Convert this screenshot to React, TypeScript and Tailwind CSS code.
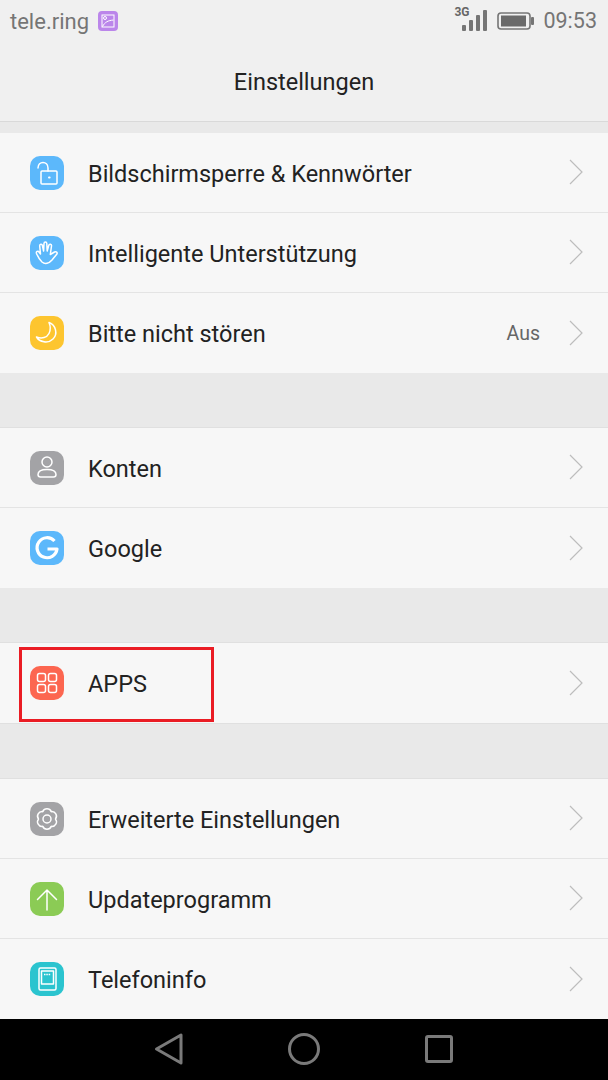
import type { ReactNode } from 'react'

function IconBox({ color, children }: { color: string; children: ReactNode }) {
  return (
    <div className={`flex h-[34px] w-[34px] shrink-0 items-center justify-center rounded-[10px] ${color}`}>
      <svg viewBox="0 0 34 34" className="h-[34px] w-[34px]" fill="none" stroke="white" strokeWidth="1.5" strokeLinecap="round" strokeLinejoin="round">
        {children}
      </svg>
    </div>
  )
}

function Chevron() {
  return (
    <svg viewBox="0 0 14 26" className="mb-[1px] h-[26px] w-[14px]" fill="none" stroke="#bdbdbd" strokeWidth="1.2">
      <path d="M1 1 L13 13 L1 25" />
    </svg>
  )
}

function Row({
  icon,
  label,
  value,
  last,
}: {
  icon: ReactNode
  label: string
  value?: string
  last?: boolean
}) {
  return (
    <div className={`flex h-[80px] items-center bg-[#f7f7f7] pl-[30px] pr-[25px] ${last ? '' : 'border-b border-[#e4e4e4]'}`}>
      {icon}
      <div className="ml-[24px] flex-1 pt-[4px] text-[23.5px] text-[#222222]">{label}</div>
      {value && <div className="mr-[29px] pt-[2px] text-[19.5px] text-[#666666]">{value}</div>}
      <Chevron />
    </div>
  )
}

function Gap() {
  return <div className="h-[55px] border-b border-[#e0e0e0] bg-[#e9e9e9]" />
}

export default function App() {
  return (
    <div className="flex h-[1080px] w-[608px] flex-col overflow-hidden bg-[#f0f0f0] font-['Roboto',sans-serif]">
      <div className="h-[122px] shrink-0 border-b border-[#d9d9d9]">
        <div className="flex h-[42px] items-center pl-[10px] pr-[11px]">
          <span className="text-[22px] text-[#757575]">tele.ring</span>
          <svg viewBox="0 0 20 20" className="ml-[9px] h-[20px] w-[20px]" fill="none" stroke="white" strokeWidth="1">
            <rect width="20" height="20" rx="4" fill="#bb86ea" stroke="none" />
            <rect x="4" y="4" width="12" height="12" />
            <circle cx="7" cy="7" r="1.5" />
            <path d="M4.5 15.5 C7 11 10 9.5 15.5 9" />
          </svg>
          <div className="ml-auto flex items-center">
            <div className="relative mb-[6px] h-[26px] w-[33px]">
              <span className="absolute left-[0px] top-[0px] text-[12px] font-bold leading-[14px] text-[#666666]">3G</span>
              <svg viewBox="0 0 25 21" className="absolute bottom-[0px] right-[0px] h-[21px] w-[25px]" fill="#757575">
                <rect x="0" y="15" width="4" height="6" rx="1" />
                <rect x="7" y="10" width="4" height="11" rx="1" />
                <rect x="14" y="5" width="4" height="16" rx="1" />
                <rect x="21" y="0" width="4" height="21" rx="1" />
              </svg>
            </div>
            <svg viewBox="0 0 38 18" className="ml-[10px] h-[18px] w-[38px]" fill="none">
              <rect x="1" y="1" width="32" height="16" rx="3" stroke="#757575" strokeWidth="1.6" />
              <rect x="4" y="3.5" width="25" height="11" fill="#6a6a6a" />
              <rect x="34" y="5" width="3" height="8" rx="1" fill="#757575" />
            </svg>
            <span className="ml-[8px] text-[21.5px] text-[#757575]">09:53</span>
          </div>
        </div>
        <div className="flex h-[79px] items-center justify-center pt-[2px] text-[23.5px] text-[#222222]">Einstellungen</div>
      </div>

      <div className="h-[11px] shrink-0 bg-[#e9e9e9]" />

      <Row
        label="Bildschirmsperre & Kennwörter"
        icon={
          <IconBox color="bg-[#5cb8fb]">
            <rect x="11" y="15" width="16" height="13" rx="1" />
            <path d="M8 12 C8 4.5 18 4.5 18 12 V15" />
            <path d="M19 21.5 h0.6" strokeWidth="2" />
          </IconBox>
        }
      />
      <Row
        label="Intelligente Unterstützung"
        icon={
          <IconBox color="bg-[#5cb8fb]">
            <path d="M12 26 C9 23 8 21 6.5 17.5 C5.8 15.5 8 14.5 9 16 L10.5 18 L9.7 10 C9.5 8 12 7.5 12.4 9.5 L13.6 15 L14 7.5 C14.1 5.6 16.7 5.6 16.8 7.5 L17.2 15 L18.8 9.3 C19.3 7.5 21.8 8 21.5 10 L20.3 18.5 L24.5 16 C26.5 15 28 17 26.5 18.5 L22 24 C19 27.5 15 28.5 12 26 Z" />
          </IconBox>
        }
      />
      <Row
        label="Bitte nicht stören"
        value="Aus"
        last
        icon={
          <IconBox color="bg-[#fdc52f]">
            <path d="M19 6.5 C26 9 28 18 23 23 C18 28 9.5 26 6.5 21 C12 23 17 21.5 19 17.5 C21 13.5 20.5 10 19 6.5 Z" />
          </IconBox>
        }
      />
      <Gap />

      <Row
        label="Konten"
        icon={
          <IconBox color="bg-[#a3a3a6]">
            <circle cx="17" cy="11" r="5" />
            <path d="M8 23.5 C8 20 12 18.5 17 18.5 C22 18.5 26 20 26 23.5 C26 25.5 25 26 23.5 26 H10.5 C9 26 8 25.5 8 23.5 Z" />
          </IconBox>
        }
      />
      <Row
        label="Google"
        last
        icon={
          <IconBox color="bg-[#5cb8fb]">
            <path d="M24.5 10 A10 10 0 1 0 27 18 H17.5" strokeWidth="3.2" strokeLinecap="butt" />
          </IconBox>
        }
      />
      <Gap />

      <div className="relative">
        <Row
          label="APPS"
          last
          icon={
            <IconBox color="bg-[#fc6650]">
              <rect x="7.5" y="7.5" width="8" height="8" rx="2" />
              <rect x="18.5" y="7.5" width="8" height="8" rx="2" />
              <rect x="7.5" y="18.5" width="8" height="8" rx="2" />
              <rect x="18.5" y="18.5" width="8" height="8" rx="2" />
            </IconBox>
          }
        />
        <div className="absolute left-[19px] top-[4px] h-[75px] w-[195px] border-[3px] border-[#ea1c24]" />
      </div>
      <div className="h-[56px] border-y border-[#e0e0e0] bg-[#e9e9e9]" />

      <Row
        label="Erweiterte Einstellungen"
        icon={
          <IconBox color="bg-[#a3a3a6]">
            <path d="M25.5 17 A4.6 4.6 0 0 1 21.25 24.36 A4.6 4.6 0 0 1 12.75 24.36 A4.6 4.6 0 0 1 8.5 17 A4.6 4.6 0 0 1 12.75 9.64 A4.6 4.6 0 0 1 21.25 9.64 A4.6 4.6 0 0 1 25.5 17 Z" />
            <circle cx="17" cy="17" r="4" />
          </IconBox>
        }
      />
      <Row
        label="Updateprogramm"
        icon={
          <IconBox color="bg-[#8bcb55]">
            <path d="M17 28 V8 M7.5 17.5 L17 8 L26.5 17.5" />
          </IconBox>
        }
      />
      <Row
        label="Telefoninfo"
        last
        icon={
          <IconBox color="bg-[#2bc4cf]">
            <rect x="9" y="6" width="17" height="22" rx="1.5" />
            <rect x="11.5" y="9" width="12" height="13" />
            <path d="M14 12.5 h7" strokeWidth="1.5" strokeDasharray="1.5 0.8" strokeLinecap="butt" />
          </IconBox>
        }
      />

      <div className="flex h-[61px] shrink-0 items-center bg-black">
        <svg viewBox="0 0 608 61" className="h-[61px] w-[608px]" fill="none" stroke="#7a7a7a" strokeWidth="3" strokeLinejoin="round">
          <path d="M156.5 30 L181 16 V44 Z" />
          <circle cx="304" cy="30" r="14.5" />
          <rect x="426.5" y="17.5" width="25" height="25" rx="1.5" />
        </svg>
      </div>
    </div>
  )
}
